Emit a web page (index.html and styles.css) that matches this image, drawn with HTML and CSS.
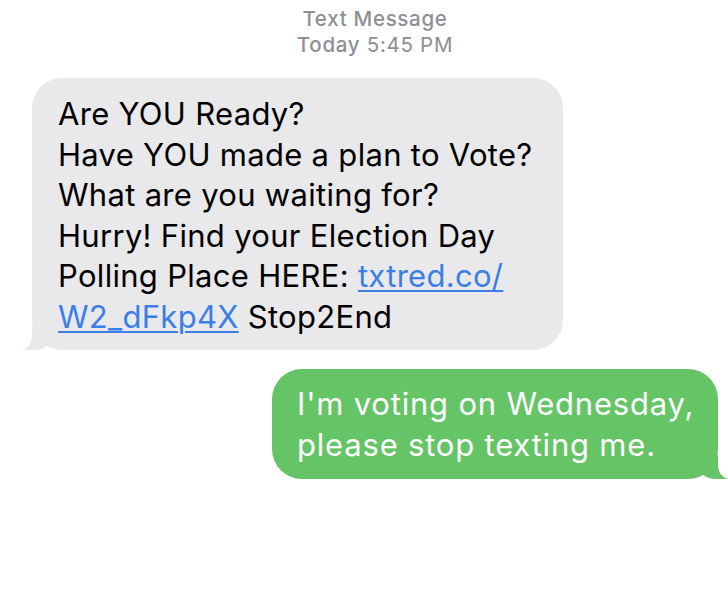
FILE: index.html
```html
<!DOCTYPE html>
<html>
<head>
<meta charset="utf-8">
<link rel="stylesheet" href="styles.css">
</head>
<body>
<div class="thread">
  <div class="stamp">
    <div class="stamp-kind">Text Message</div>
    <div class="stamp-time"><span class="day">Today</span> 5:45 PM</div>
  </div>
  <div class="row row-in">
    <div class="bubble bubble-in">Are YOU Ready?<br>Have YOU made a plan to Vote?<br>What are you waiting for?<br>Hurry! Find your Election Day<br>Polling Place HERE: <a class="link" href="#">txtred.co/<br>W2_dFkp4X</a> Stop2End</div>
  </div>
  <div class="row row-out">
    <div class="bubble bubble-out">I'm voting on Wednesday,<br>please stop texting me.</div>
  </div>
</div>
</body>
</html>
```

FILE: styles.css
```css
html, body {
  margin: 0;
  padding: 0;
  background: #ffffff;
}
body {
  font-family: Inter, "Noto Sans", "Liberation Sans", sans-serif;
  width: 728px;
  height: 600px;
  overflow: hidden;
}
.thread {
  display: flex;
  flex-direction: column;
}
.stamp {
  padding: 6px 0 0 22px;
  text-align: center;
  color: #8e8e93;
  font-size: 20.5px;
  line-height: 26px;
  letter-spacing: 0.7px;
}
.stamp-kind {
  font-weight: 500;
}
.day {
  font-weight: 500;
}
.row {
  display: flex;
}
.row-in {
  margin-top: 20px;
  padding-left: 32px;
}
.row-out {
  margin-top: 19px;
  justify-content: flex-end;
  padding-right: 10px;
}
.bubble {
  position: relative;
  box-sizing: border-box;
  font-size: 31px;
  line-height: 40.5px;
  letter-spacing: 0.3px;
}
.bubble-in {
  width: 531px;
  height: 272px;
  padding: 16px 14px 13px 26px;
  background: #e9e9eb;
  color: #000000;
  border-radius: 30px;
}
.bubble-out {
  width: 446px;
  height: 110px;
  padding: 15px 10px 15px 25px;
  background: #65c466;
  color: #ffffff;
  border-radius: 30px;
  letter-spacing: 0.8px;
}
.link {
  color: #3a7ee6;
  text-decoration: underline;
  text-decoration-thickness: 2px;
  text-underline-offset: 3px;
}
.bubble-in::before {
  content: "";
  position: absolute;
  bottom: 0;
  left: -10px;
  width: 30px;
  height: 24px;
  background: #e9e9eb;
  border-bottom-right-radius: 18px 14px;
}
.bubble-in::after {
  content: "";
  position: absolute;
  bottom: 0;
  left: -14px;
  width: 14px;
  height: 26px;
  background: #ffffff;
  border-bottom-right-radius: 12px 14px;
}
.bubble-out::before {
  content: "";
  position: absolute;
  bottom: 0;
  right: -10px;
  width: 30px;
  height: 24px;
  background: #65c466;
  border-bottom-left-radius: 18px 14px;
}
.bubble-out::after {
  content: "";
  position: absolute;
  bottom: 0;
  right: -14px;
  width: 14px;
  height: 26px;
  background: #ffffff;
  border-bottom-left-radius: 12px 14px;
}
```
